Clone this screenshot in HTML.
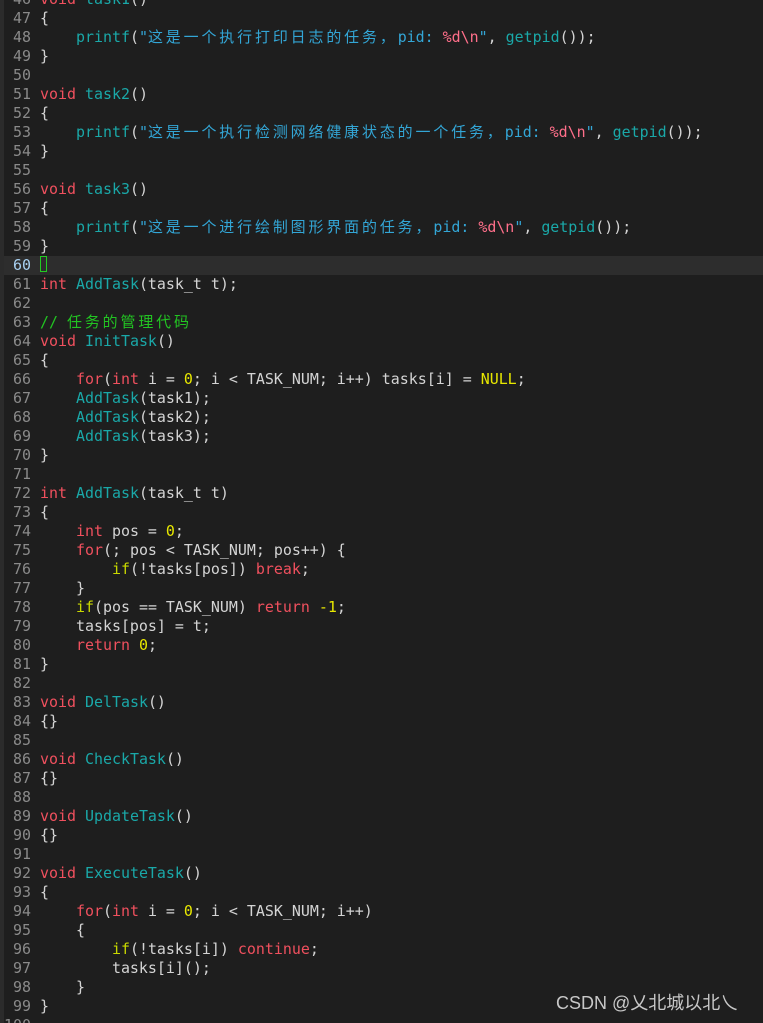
<!DOCTYPE html>
<html><head><meta charset="utf-8"><style>
html,body{margin:0;padding:0;background:#1e1e1e;width:763px;height:1023px;overflow:hidden;position:relative}
.strip{position:absolute;left:0;top:0;width:4px;height:1023px;background:#2b2b2b}
.hl{position:absolute;left:4px;top:255.5px;width:759px;height:19px;background:#2d2d2d}
.cur{position:absolute;left:40px;top:256px;width:7px;height:16px;border:1px solid #22cc22;box-sizing:border-box}
pre{position:absolute;margin:0;top:-10.5px;font-family:"DejaVu Sans Mono","Liberation Mono","Noto Sans CJK SC",monospace;font-size:14.95px;line-height:19px;color:#d4d4d4;white-space:pre}
.ln{left:0;width:31px;text-align:right;color:#8a8a8a}
.code{left:40px}
.k{color:#f0505e}.f{color:#1aa8a8}.s{color:#33a6d6}.c{letter-spacing:2.9px}.p{color:#ff6f8a}.n{color:#e8e800}.y{color:#c8d800}.g{color:#22c422}
.cl{color:#a8d0f0}
.wm{position:absolute;left:556px;top:989px;font-family:"Liberation Sans","Noto Sans CJK SC",sans-serif;font-size:18px;color:#c8c8c8}
</style></head><body>
<div class="strip"></div><div class="hl"></div><div class="cur"></div>
<pre class="ln">46
47
48
49
50
51
52
53
54
55
56
57
58
59
<span class="cl">60</span>
61
62
63
64
65
66
67
68
69
70
71
72
73
74
75
76
77
78
79
80
81
82
83
84
85
86
87
88
89
90
91
92
93
94
95
96
97
98
99
100</pre>
<pre class="code"><span class="k">void</span> <span class="f">task1</span>()
{
    <span class="f">printf</span>(<span class="s">"<span class="c">这是一个执行打印日志的任务，</span>pid: </span><span class="p">%d\n</span><span class="s">"</span>, <span class="f">getpid</span>());
}

<span class="k">void</span> <span class="f">task2</span>()
{
    <span class="f">printf</span>(<span class="s">"<span class="c">这是一个执行检测网络健康状态的一个任务，</span>pid: </span><span class="p">%d\n</span><span class="s">"</span>, <span class="f">getpid</span>());
}

<span class="k">void</span> <span class="f">task3</span>()
{
    <span class="f">printf</span>(<span class="s">"<span class="c">这是一个进行绘制图形界面的任务，</span>pid: </span><span class="p">%d\n</span><span class="s">"</span>, <span class="f">getpid</span>());
}

<span class="k">int</span> <span class="f">AddTask</span>(task_t t);

<span class="g">// <span class="c">任务的管理代码</span></span>
<span class="k">void</span> <span class="f">InitTask</span>()
{
    <span class="k">for</span>(<span class="k">int</span> i = <span class="n">0</span>; i &lt; TASK_NUM; i++) tasks[i] = <span class="n">NULL</span>;
    <span class="f">AddTask</span>(task1);
    <span class="f">AddTask</span>(task2);
    <span class="f">AddTask</span>(task3);
}

<span class="k">int</span> <span class="f">AddTask</span>(task_t t)
{
    <span class="k">int</span> pos = <span class="n">0</span>;
    <span class="k">for</span>(; pos &lt; TASK_NUM; pos++) {
        <span class="y">if</span>(!tasks[pos]) <span class="k">break</span>;
    }
    <span class="y">if</span>(pos == TASK_NUM) <span class="k">return</span> <span class="n">-1</span>;
    tasks[pos] = t;
    <span class="k">return</span> <span class="n">0</span>;
}

<span class="k">void</span> <span class="f">DelTask</span>()
{}

<span class="k">void</span> <span class="f">CheckTask</span>()
{}

<span class="k">void</span> <span class="f">UpdateTask</span>()
{}

<span class="k">void</span> <span class="f">ExecuteTask</span>()
{
    <span class="k">for</span>(<span class="k">int</span> i = <span class="n">0</span>; i &lt; TASK_NUM; i++)
    {
        <span class="y">if</span>(!tasks[i]) <span class="k">continue</span>;
        tasks[i]();
    }
}
</pre>
<div class="wm">CSDN @乂北城以北乀</div>
</body></html>
